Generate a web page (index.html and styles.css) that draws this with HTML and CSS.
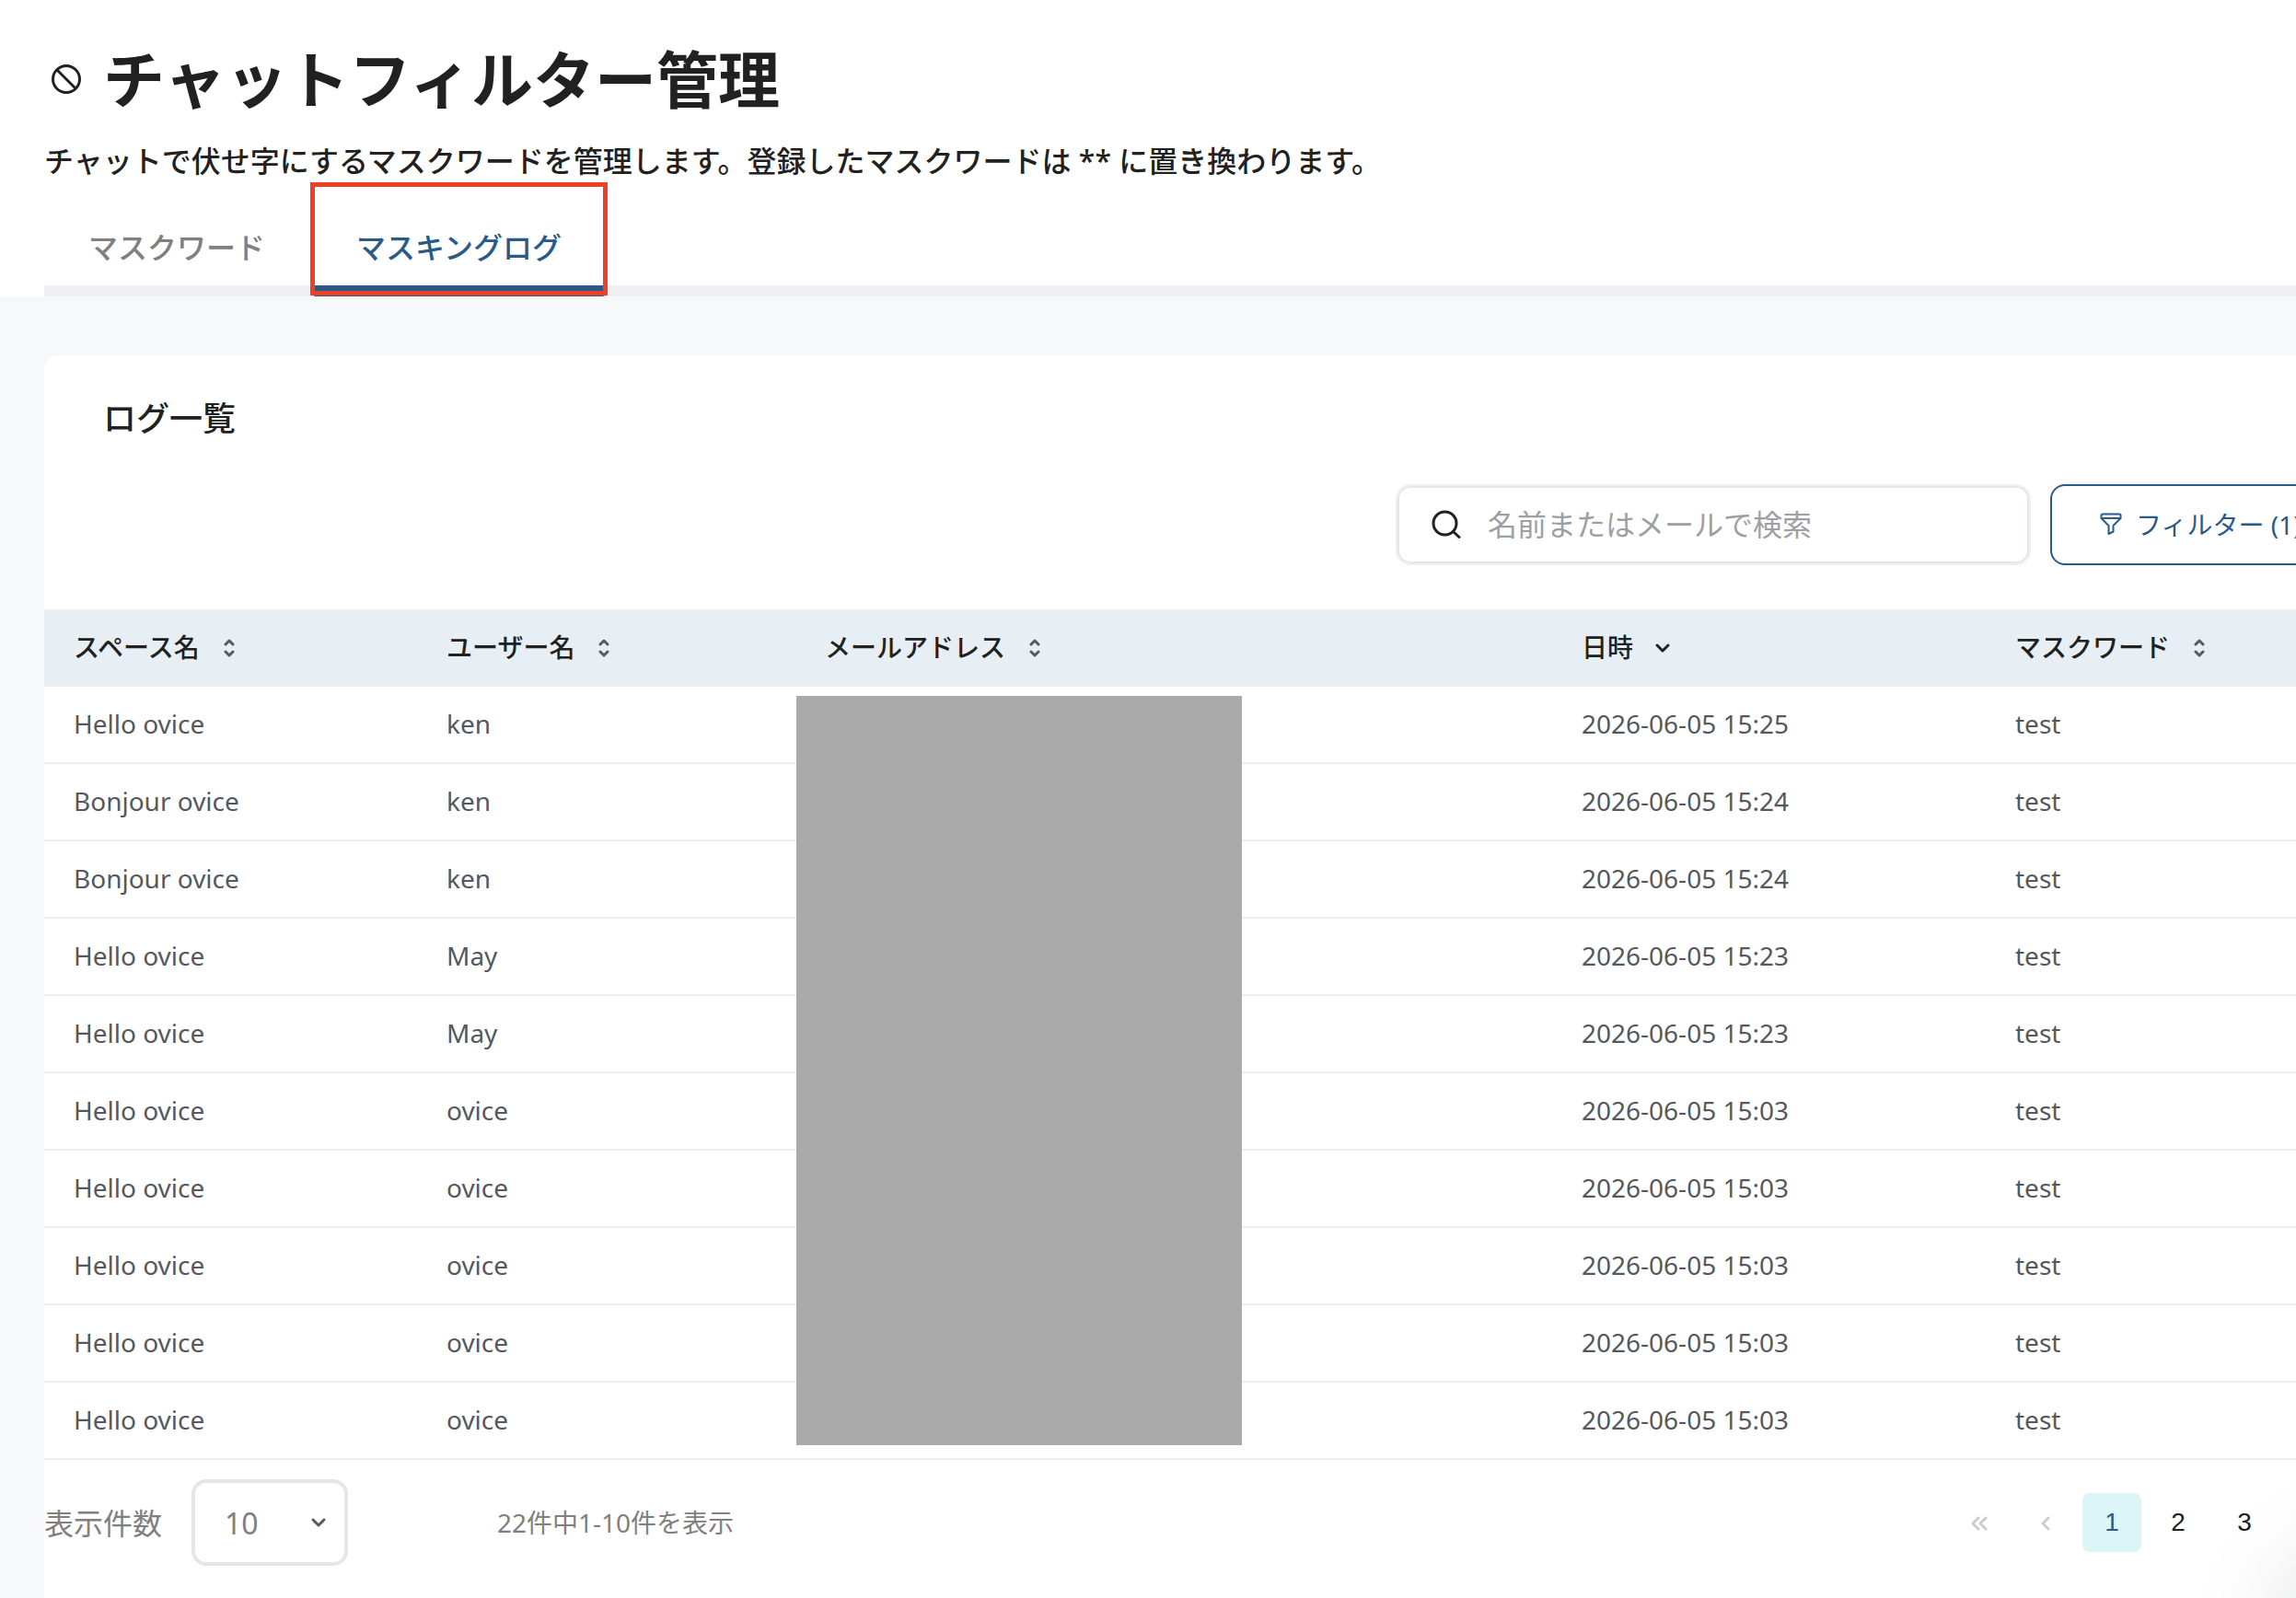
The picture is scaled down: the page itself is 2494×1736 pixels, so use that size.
FILE: index.html
```html
<!DOCTYPE html>
<html lang="ja">

<head>
    <meta charset="UTF-8">
    <title>チャットフィルター管理</title>
    <link rel="stylesheet" href="styles.css">
</head>

<body>
    <svg class="defs" aria-hidden="true">
        <symbol id="sort" viewBox="0 0 12 20">
            <path d="M2 6l4-4 4 4M2 14l4 4 4-4" />
        </symbol>
        <symbol id="down" viewBox="0 0 16 10">
            <path d="M2 2l6 6 6-6" />
        </symbol>
    </svg>

    <header class="header">
        <div class="title">
            <svg class="ban" viewBox="0 0 32 32">
                <circle cx="16" cy="16" r="14.5" />
                <path d="M6 6l20 20" />
            </svg>
            <h1>チャットフィルター管理</h1>
        </div>
        <p class="desc">チャットで伏せ字にするマスクワードを管理します。登録したマスクワードは ** に置き換わります。</p>
        <nav class="tabs">
            <a class="tab" href="#words">マスクワード</a>
            <a class="tab active" href="#logs">マスキングログ</a>
        </nav>
    </header>

    <main class="main">
        <section class="card">
            <h2>ログ一覧</h2>
            <div class="toolbar">
                <label class="search">
                    <svg viewBox="0 0 32 32">
                        <circle cx="14.5" cy="14.5" r="12.5" />
                        <path d="M23.5 23.5l6.5 6" />
                    </svg>
                    <input type="text" placeholder="名前またはメールで検索" aria-label="名前またはメールで検索">
                </label>
                <button class="filter" type="button">
                    <svg viewBox="0 0 24 24">
                        <path d="M3 1.5h18q1.500 0 1.500 1.500v3l-8 8v6.500l-5 2.500v-9l-8-8v-3q0-1.500 1.500-1.500z" />
                        <path d="M2 6h20" />
                    </svg>
                    フィルター (1)
                </button>
            </div>

            <div class="table-wrap">
                <table>
                    <colgroup>
                        <col class="col-space">
                        <col class="col-user">
                        <col class="col-mail">
                        <col class="col-date">
                        <col>
                    </colgroup>
                    <thead>
                        <tr>
                            <th>スペース名<svg class="sort"><use href="#sort" /></svg></th>
                            <th>ユーザー名<svg class="sort"><use href="#sort" /></svg></th>
                            <th>メールアドレス<svg class="sort"><use href="#sort" /></svg></th>
                            <th>日時<svg class="down"><use href="#down" /></svg></th>
                            <th>マスクワード<svg class="sort"><use href="#sort" /></svg></th>
                        </tr>
                    </thead>
                    <tbody>
                        <tr><td>Hello ovice</td><td>ken</td><td></td><td>2026-06-05 15:25</td><td>test</td></tr>
                        <tr><td>Bonjour ovice</td><td>ken</td><td></td><td>2026-06-05 15:24</td><td>test</td></tr>
                        <tr><td>Bonjour ovice</td><td>ken</td><td></td><td>2026-06-05 15:24</td><td>test</td></tr>
                        <tr><td>Hello ovice</td><td>May</td><td></td><td>2026-06-05 15:23</td><td>test</td></tr>
                        <tr><td>Hello ovice</td><td>May</td><td></td><td>2026-06-05 15:23</td><td>test</td></tr>
                        <tr><td>Hello ovice</td><td>ovice</td><td></td><td>2026-06-05 15:03</td><td>test</td></tr>
                        <tr><td>Hello ovice</td><td>ovice</td><td></td><td>2026-06-05 15:03</td><td>test</td></tr>
                        <tr><td>Hello ovice</td><td>ovice</td><td></td><td>2026-06-05 15:03</td><td>test</td></tr>
                        <tr><td>Hello ovice</td><td>ovice</td><td></td><td>2026-06-05 15:03</td><td>test</td></tr>
                        <tr><td>Hello ovice</td><td>ovice</td><td></td><td>2026-06-05 15:03</td><td>test</td></tr>
                    </tbody>
                </table>
                <!-- メールアドレスの目隠し -->
                <div class="cover"></div>
            </div>

            <div class="footer">
                <label for="size">表示件数</label>
                <div class="select">
                    <select id="size">
                        <option>10</option>
                        <option>20</option>
                        <option>50</option>
                    </select>
                    <svg class="down"><use href="#down" /></svg>
                </div>
                <span class="count">22件中1-10件を表示</span>
                <nav class="pager">
                    <button type="button" disabled aria-label="最初"><svg viewBox="0 0 20 16"><path d="M9 2L3 8l6 6M17 2l-6 6 6 6" /></svg></button>
                    <button type="button" disabled aria-label="前へ"><svg viewBox="0 0 20 16"><path d="M13 2L7 8l6 6" /></svg></button>
                    <button type="button" class="current">1</button>
                    <button type="button">2</button>
                    <button type="button">3</button>
                    <button type="button" aria-label="次へ"><svg viewBox="0 0 20 16"><path d="M9 2l6 6-6 6" /></svg></button>
                    <button type="button" aria-label="最後"><svg viewBox="0 0 20 16"><path d="M3 2l6 6-6 6M11 2l6 6-6 6" /></svg></button>
                </nav>
            </div>
        </section>
    </main>
    <div class="glow"></div>
</body>

</html>
```
FILE: styles.css
```css
* {
    box-sizing: border-box;
}

body {
    margin: 0;
    min-height: 100vh;
    background: #f7f8fa;
    color: #212121;
    font-family: "Noto Sans", "Noto Sans CJK JP", sans-serif;
    font-size: 28px;
    overflow: hidden;
}

h1,
h2,
p {
    margin: 0;
}

svg {
    fill: none;
    stroke: currentColor;
    stroke-width: 3;
    stroke-linecap: round;
    stroke-linejoin: round;
}

.defs {
    position: absolute;
    width: 0;
    height: 0;
}

/* header */
.header {
    padding: 38px 0 0 48px;
    background: #fff;
}

.title {
    display: flex;
    align-items: center;
    gap: 24px;
    height: 96px;
    padding-left: 8px;
}

.title h1 {
    font-size: 67px;
    line-height: 96px;
}

.ban {
    width: 32px;
    height: 32px;
}

.desc {
    margin-top: 17px;
    font-size: 32px;
    font-weight: 500;
    line-height: 48px;
}

.tabs {
    display: flex;
    gap: 3px;
    height: 123px;
    border-bottom: 12px solid #efeef3;
}

.tab {
    position: relative;
    padding: 46px 48px 0;
    color: #808080;
    font-size: 32px;
    font-weight: 500;
    line-height: 48px;
    text-decoration: none;
}

.tab.active {
    margin-bottom: -12px;
    border-bottom: 12px solid #295b89;
    border-radius: 0 0 4px 4px;
    color: #295b89;
}

.tab.active::after {
    content: "";
    position: absolute;
    inset: -1px -2px -11px;
    border: 5px solid #ee4023;
}

/* card */
.main {
    padding: 64px 0 0 48px;
}

.card {
    min-height: calc(100vh - 386px);
    margin-right: -128px;
    border-radius: 16px 0 0 0;
    background: #fff;
}

.card h2 {
    padding: 42px 64px 0;
    font-size: 36px;
    font-weight: 500;
    line-height: 54px;
}

.toolbar {
    display: flex;
    justify-content: flex-end;
    gap: 21px;
    padding: 44px 64px 48px;
}

.search {
    display: flex;
    align-items: center;
    gap: 29px;
    width: 690px;
    height: 88px;
    padding-left: 37px;
    border: 2px solid #f1eff4;
    border-radius: 16px;
    box-shadow: inset 0 0 0 2px #e8e4ea;
}

.search svg {
    width: 32px;
    height: 32px;
}

.search input {
    flex: 1;
    min-width: 0;
    padding: 0 0 2px;
    border: 0;
    outline: 0;
    background: none;
    color: inherit;
    font: inherit;
    font-size: 32px;
}

.search input::placeholder {
    color: #9e9fa3;
}

.filter {
    display: flex;
    align-items: center;
    gap: 15px;
    width: 331px;
    height: 88px;
    padding: 0 52px 2px;
    border: 2px solid #295b89;
    border-radius: 16px;
    background: #fff;
    color: #295b89;
    font: inherit;
    white-space: nowrap;
}

.filter svg {
    width: 24px;
    height: 24px;
    stroke-width: 2;
}

/* table */
.table-wrap {
    position: relative;
}

table {
    width: 100%;
    border-collapse: separate;
    border-spacing: 0;
    table-layout: fixed;
}

.col-space {
    width: 405px;
}

.col-user {
    width: 411px;
}

.col-mail {
    width: 822px;
}

.col-date {
    width: 471px;
}

th,
td {
    height: 84px;
    padding: 0 32px 2px;
    border-bottom: 2px solid #eeedf2;
    text-align: left;
    white-space: nowrap;
}

th {
    background: #e7eff5;
    font-weight: 500;
}

td {
    color: #55585e;
}

.sort {
    width: 12px;
    height: 20px;
    margin-left: 26px;
    vertical-align: 0;
    color: #55585e;
}

.down {
    width: 16px;
    height: 10px;
    margin-left: 24px;
    vertical-align: 5px;
}

.cover {
    position: absolute;
    top: 94px;
    left: 817px;
    width: 484px;
    height: 814px;
    background: #aaa;
}

/* footer */
.footer {
    display: flex;
    align-items: center;
    padding: 21px 8px 34px 0;
    color: #808080;
}

.footer label,
.count {
    padding-bottom: 2px;
}

.footer label {
    font-size: 32px;
}

.select {
    position: relative;
    margin: 0 162px 0 32px;
}

.select select {
    display: block;
    width: 170px;
    height: 94px;
    padding: 0 32px;
    border: 4px solid #e8e4ea;
    border-radius: 16px;
    appearance: none;
    background: #fff;
    color: #808080;
    font: inherit;
    font-size: 32px;
}

.select .down {
    position: absolute;
    top: 42px;
    right: 24px;
    color: #55585e;
}

.pager {
    display: flex;
    gap: 8px;
    margin-left: auto;
}

.pager button {
    width: 64px;
    height: 64px;
    padding: 0;
    border: 0;
    border-radius: 8px;
    background: none;
    color: #212121;
    font: 28px "Liberation Sans", sans-serif;
}

.pager button:disabled {
    color: #ccc;
}

.pager .current {
    background: #dcf6f8;
    color: #295b89;
}

.pager svg {
    width: 20px;
    height: 16px;
}

/* shade of the chat bubble outside the right bottom corner */
.glow {
    position: fixed;
    right: -150px;
    bottom: -110px;
    width: 120px;
    height: 120px;
    border-radius: 50%;
    box-shadow: 0 0 120px 30px rgba(0, 30, 20, 0.2);
}
```
